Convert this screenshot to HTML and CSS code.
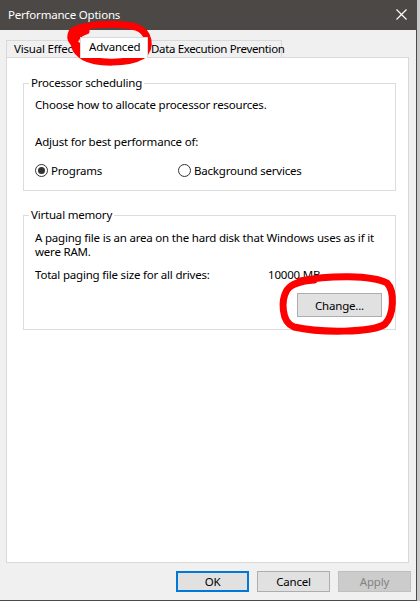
FILE: index.html
```html
<!DOCTYPE html>
<html>
<head>
<meta charset="utf-8">
<link rel="stylesheet" href="styles.css">
</head>
<body>
<div class="window">
  <div class="titlebar">
    <span class="title">Performance Options</span>
    <svg class="close" width="11" height="11" viewBox="0 0 11 11"><path d="M0.5 0.5 L10.5 10.5 M10.5 0.5 L0.5 10.5" stroke="#ffffff" stroke-width="1.2" fill="none"/></svg>
  </div>
  <div class="content">
    <div class="tabs">
      <div class="tab tab-ve">Visual Effects</div>
      <div class="tab tab-sel">Advanced</div>
      <div class="tab tab-dep">Data Execution Prevention</div>
    </div>
    <div class="panel">
      <fieldset class="group group-ps">
        <legend>Processor scheduling</legend>
        <p class="line l1">Choose how to allocate processor resources.</p>
        <p class="line l2">Adjust for best performance of:</p>
        <div class="radios">
          <label class="radio r-prog"><span class="dot checked"></span>Programs</label>
          <label class="radio"><span class="dot"></span>Background services</label>
        </div>
      </fieldset>
      <fieldset class="group group-vm">
        <legend>Virtual memory</legend>
        <p class="line v1">A paging file is an area on the hard disk that Windows uses as if it were RAM.</p>
        <div class="total"><span class="tlabel">Total paging file size for all drives:</span><span>10000 MB</span></div>
        <div class="chrow"><button class="btn change">Change...</button></div>
      </fieldset>
    </div>
    <div class="buttons">
      <button class="btn ok">OK</button>
      <button class="btn">Cancel</button>
      <button class="btn disabled">Apply</button>
    </div>
  </div>
  <svg class="marks" width="420" height="601" viewBox="0 0 420 601">
    <path d="M86 48 C 74 46, 68 40, 72 32 C 80 24, 116 22, 136 27 C 150 32, 152 48, 142 56 C 128 64, 96 64, 84 57 C 74 51, 72 43, 77 37 C 79 34, 83 32, 86 31" stroke="#ff0000" stroke-width="7" fill="none" stroke-linecap="round" stroke-linejoin="round"/>
    <path d="M300 281 C 330 275, 372 275, 387 283 C 395 291, 394 315, 385 324 C 372 333, 320 333, 294 327 C 281 322, 281 300, 287 290 C 292 283, 301 281, 314 280" stroke="#ff0000" stroke-width="7" fill="none" stroke-linecap="round" stroke-linejoin="round"/>
  </svg>
</div>
</body>
</html>
```
FILE: styles.css
```css
html, body {
  margin: 0;
  padding: 0;
}
body {
  width: 420px;
  height: 601px;
  background: #c8c8c8;
  font-family: "Noto Sans", "Open Sans", sans-serif;
  font-size: 11.5px;
  letter-spacing: -0.2px;
  color: #000;
  overflow: hidden;
}
.window {
  position: relative;
  width: 416px;
  height: 600px;
  background: #f0f0f0;
  border-right: 1px solid #4a4a4a;
  border-bottom: 1px solid #4a4a4a;
  display: flex;
  flex-direction: column;
}
.titlebar {
  height: 30px;
  background: #4b4846;
  color: #fff;
  display: flex;
  align-items: center;
  justify-content: space-between;
  padding: 0 9px 1px 8px;
  box-sizing: border-box;
  flex: none;
}
.close {
  display: block;
  margin-top: -1px;
}
.content {
  padding: 0 6px 0 6px;
  display: flex;
  flex-direction: column;
  flex: 1;
}
.tabs {
  height: 27px;
  display: flex;
  align-items: flex-end;
  flex: none;
}
.tab {
  box-sizing: border-box;
  border: 1px solid #d9d9d9;
  border-bottom: none;
  background: #f0f0f0;
  height: 17px;
  line-height: 16px;
  white-space: nowrap;
}
.tab-ve {
  width: 80px;
  padding: 0 0 0 7px;
  margin-right: -6px;
}
.tab-sel {
  position: relative;
  z-index: 1;
  height: 21px;
  width: 68px;
  background: #fff;
  padding-left: 8px;
  margin-bottom: -1px;
  line-height: 18px;
}
.tab-dep {
  width: 135px;
  padding-left: 3px;
  margin-left: -1px;
  letter-spacing: -0.35px;
}
.panel {
  position: relative;
  z-index: 0;
  box-sizing: border-box;
  width: 403px;
  height: 506px;
  background: #fff;
  border: 1px solid #d9d9d9;
  padding: 17px 13px 0 16px;
  flex: none;
}
.group {
  margin: 0;
  border: 1px solid #dcdcdc;
  padding: 0 0 0 11px;
  box-sizing: border-box;
  width: 373px;
}
.group legend {
  margin-left: -6px;
  padding: 0 2px;
  line-height: 16px;
}
.group-ps {
  height: 116px;
}
.group-vm {
  margin-top: 16px;
  height: 123px;
}
.line {
  margin: 0;
  line-height: 14px;
}
.l1 {
  margin-top: 7px;
}
.l2 {
  margin-top: 23px;
}
.radios {
  display: flex;
  margin-top: 13px;
  align-items: center;
  height: 16px;
}
.radio {
  display: flex;
  align-items: center;
}
.r-prog {
  width: 143px;
}
.dot {
  box-sizing: border-box;
  width: 13px;
  height: 13px;
  border: 1px solid #333;
  border-radius: 50%;
  margin-right: 3px;
  display: flex;
  align-items: center;
  justify-content: center;
  background: #fff;
}
.dot.checked::after {
  content: "";
  width: 7px;
  height: 7px;
  border-radius: 50%;
  background: #333;
}
.v1 {
  margin-top: 8px;
  padding-right: 8px;
}
.total {
  display: flex;
  margin-top: 9px;
  line-height: 14px;
}
.tlabel {
  width: 233px;
}
.chrow {
  display: flex;
  justify-content: flex-end;
  padding-right: 13px;
  margin-top: 11px;
}
.btn {
  box-sizing: border-box;
  font-family: inherit;
  font-size: 11.5px;
  letter-spacing: -0.2px;
  color: #000;
  background: #e1e1e1;
  border: 1px solid #adadad;
  width: 73px;
  height: 21px;
  padding: 0;
  margin: 0;
}
.change {
  width: 85px;
  height: 24px;
}
.buttons {
  display: flex;
  justify-content: flex-end;
  gap: 8px;
  margin-top: 8px;
  margin-right: -1px;
}
.ok {
  border: 2px solid #0078d7;
}
.disabled {
  background: #cccccc;
  border-color: #bfbfbf;
  color: #838383;
}
.marks {
  position: absolute;
  left: 0;
  top: 0;
  pointer-events: none;
}
```
